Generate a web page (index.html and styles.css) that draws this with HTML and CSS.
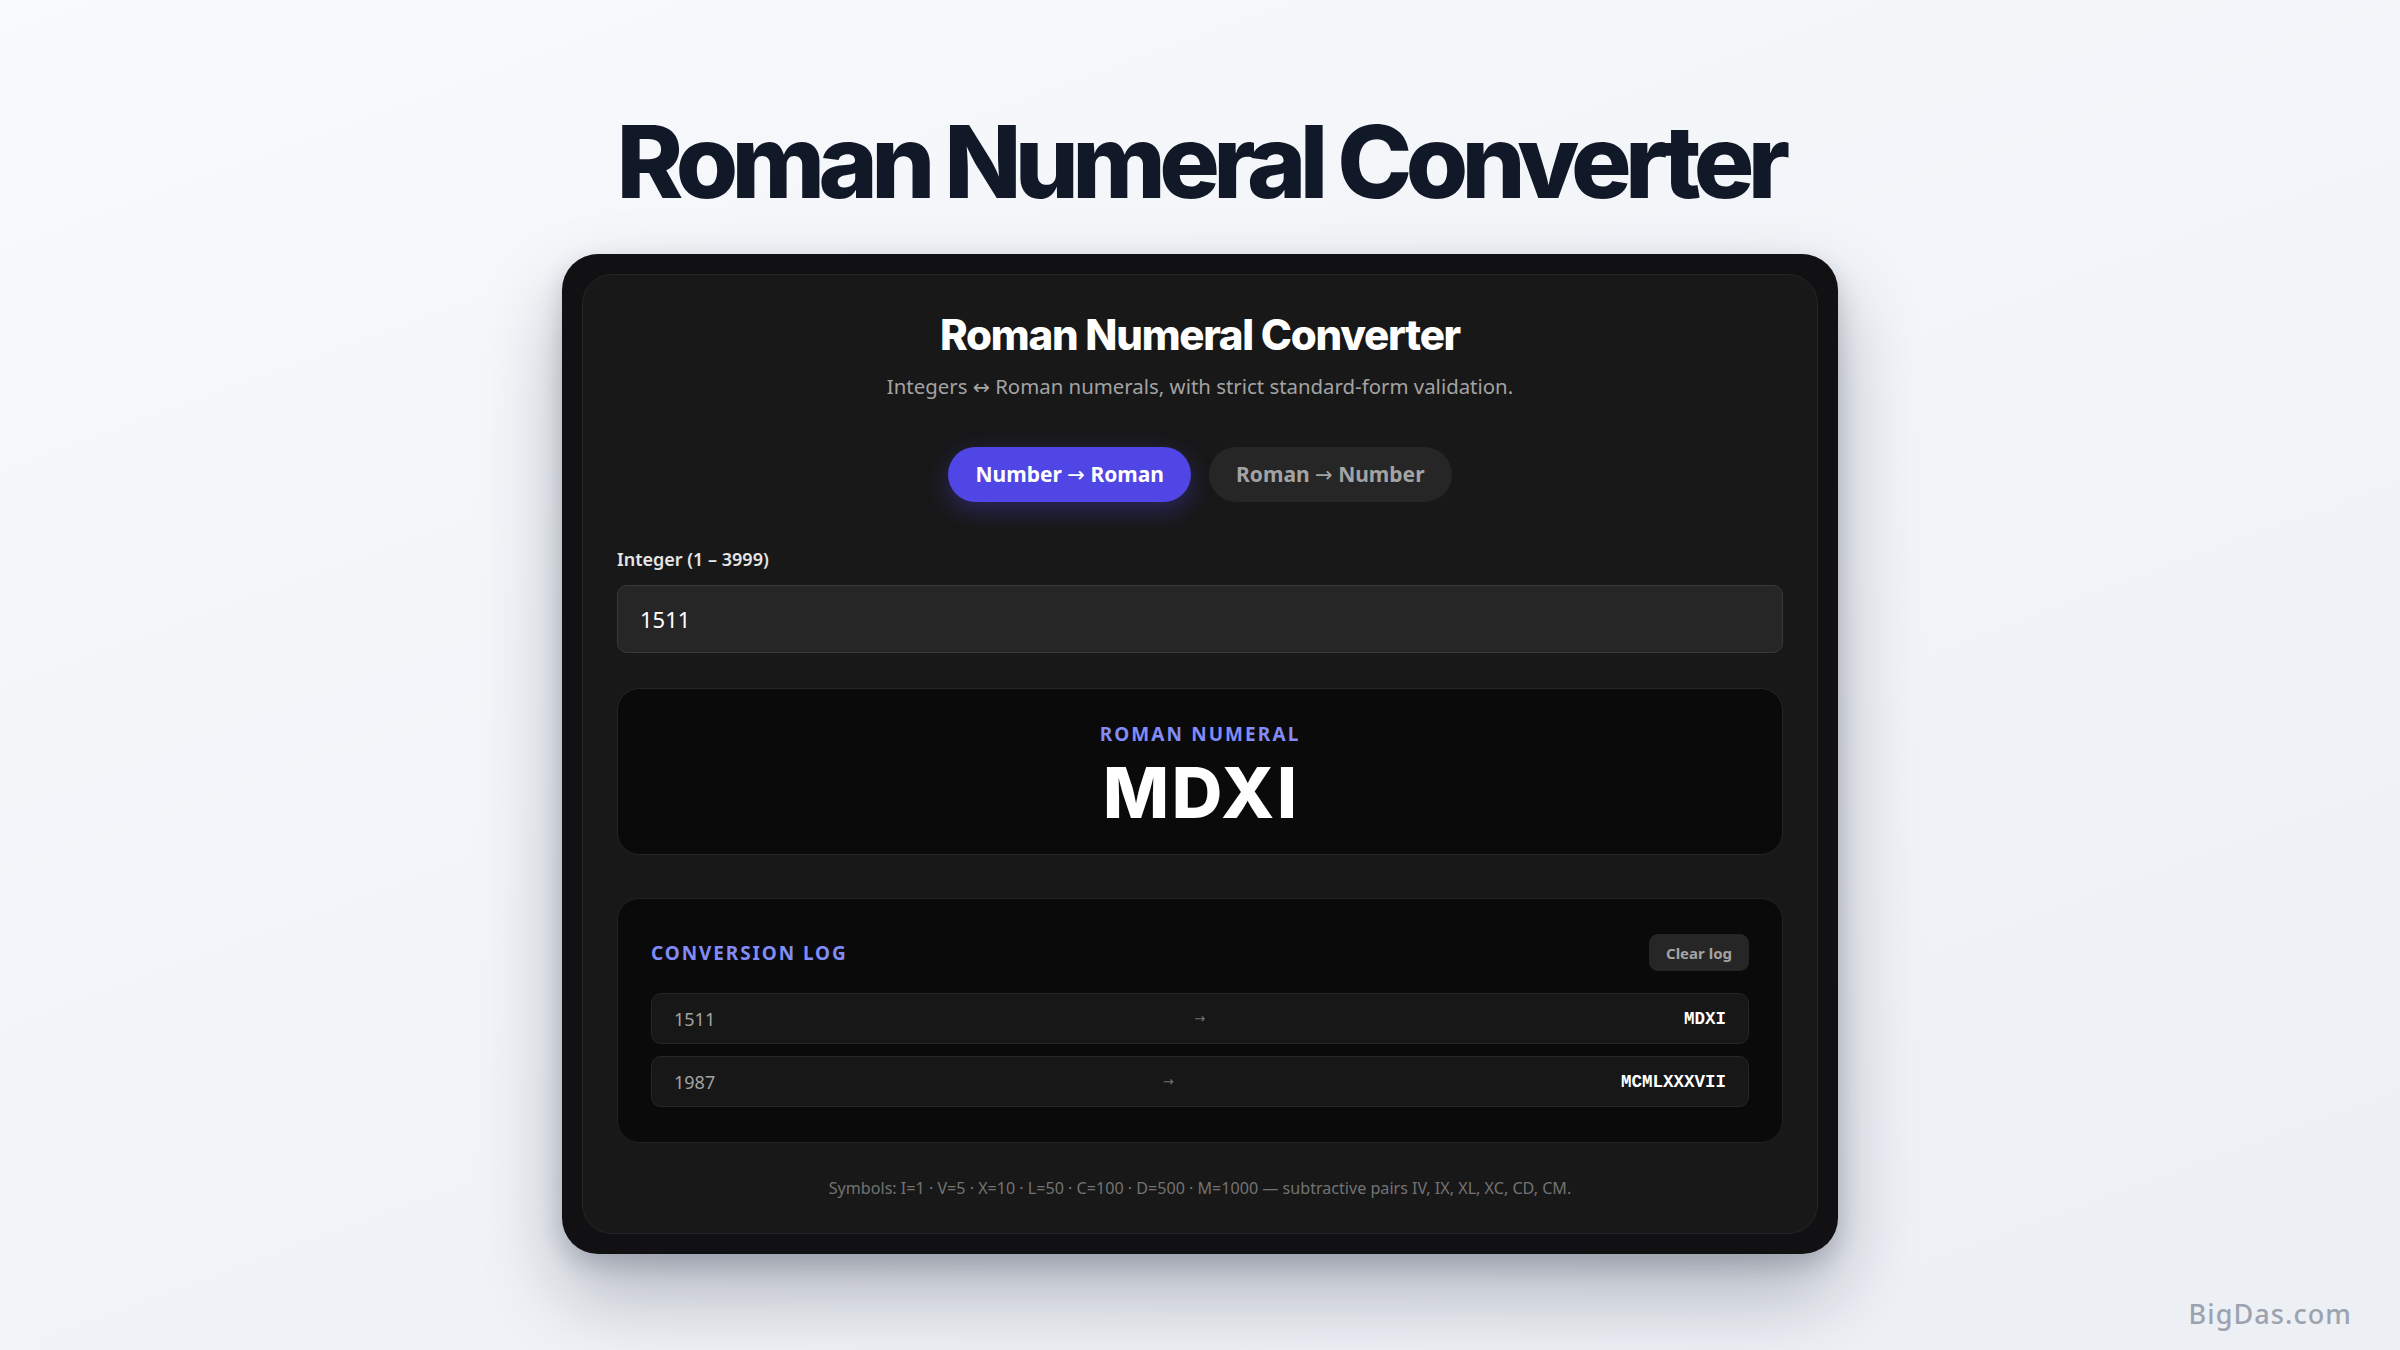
FILE: index.html
```html
<!DOCTYPE html>
<html lang="en">
<head>
<meta charset="utf-8">
<title>Roman Numeral Converter</title>
<link rel="stylesheet" href="styles.css">
</head>
<body>
<main class="page">
  <h1 class="page-title">Roman Numeral Converter</h1>
  <section class="frame">
    <div class="card">
      <h2 class="card-title">Roman Numeral Converter</h2>
      <p class="subtitle">Integers <span class="arr">↔</span> Roman numerals, with strict standard-form validation.</p>
      <div class="tabs">
        <button class="tab tab-active">Number <span class="arr">→</span> Roman</button>
        <button class="tab">Roman <span class="arr">→</span> Number</button>
      </div>
      <label class="field-label" for="num">Integer (1 – 3999)</label>
      <input class="field-input" id="num" type="text" value="1511">
      <div class="result">
        <div class="result-label">ROMAN NUMERAL</div>
        <div class="result-value">MDXI</div>
      </div>
      <div class="log">
        <div class="log-head">
          <span class="log-title">CONVERSION LOG</span>
          <button class="log-clear">Clear log</button>
        </div>
        <div class="log-rows">
          <div class="log-row"><span class="log-in">1511</span><span class="log-arrow">→</span><span class="log-out">MDXI</span></div>
          <div class="log-row"><span class="log-in">1987</span><span class="log-arrow">→</span><span class="log-out">MCMLXXXVII</span></div>
        </div>
      </div>
      <p class="footnote">Symbols: I=1 · V=5 · X=10 · L=50 · C=100 · D=500 · M=1000 — subtractive pairs IV, IX, XL, XC, CD, CM.</p>
    </div>
  </section>
</main>
<div class="watermark">BigDas.com</div>
</body>
</html>
```

FILE: styles.css
```css
* { box-sizing: border-box; }
html, body { margin: 0; padding: 0; }
body {
  min-height: 1350px;
  background: linear-gradient(160deg, #f8fafc 0%, #f1f4f8 50%, #eceff4 100%);
  font-family: "Noto Sans", "Open Sans", sans-serif;
  position: relative;
}
.page {
  display: flex;
  flex-direction: column;
  align-items: center;
  padding-top: 104px;
}
.page-title {
  margin: 0;
  font-family: Inter, sans-serif;
  font-weight: 800;
  font-size: 101px;
  line-height: 114px;
  letter-spacing: -0.066em;
  color: #111827;
}
.frame {
  margin-top: 36px;
  width: 1276px;
  padding: 20px;
  background: #111113;
  border-radius: 36px;
  box-shadow: 0 40px 80px rgba(15, 23, 42, 0.28), 0 10px 24px rgba(15, 23, 42, 0.18);
}
.card {
  background: #181818;
  border: 1px solid #262626;
  border-radius: 30px;
  padding: 34px 34px 33px;
  display: flex;
  flex-direction: column;
}
.arr {
  font-family: "DejaVu Sans", sans-serif;
  font-weight: 400;
  line-height: 1;
}
.card-title {
  margin: 0;
  text-align: center;
  color: #ffffff;
  font-family: Inter, sans-serif;
  font-weight: 800;
  font-size: 42px;
  line-height: 52px;
  letter-spacing: -0.03em;
}
.subtitle {
  margin: 10px 0 0;
  text-align: center;
  color: #a3a3a3;
  font-size: 20.4px;
  line-height: 30px;
}
.tabs {
  margin-top: 46px;
  display: flex;
  justify-content: center;
  gap: 18px;
}
.tab {
  height: 55px;
  padding: 0 27px;
  border: none;
  border-radius: 999px;
  background: #262626;
  color: #a3a3a3;
  font-family: "Noto Sans", sans-serif;
  font-weight: 700;
  font-size: 21px;
  line-height: 1;
}
.tab-active {
  background: #4f46e5;
  color: #ffffff;
  box-shadow: 0 8px 24px rgba(79, 70, 229, 0.35);
}
.field-label {
  margin-top: 44px;
  color: #e5e5e5;
  font-weight: 600;
  font-size: 18px;
  line-height: 26px;
}
.field-input {
  margin-top: 13px;
  height: 68px;
  width: 100%;
  background: #262626;
  border: 1.5px solid #3a3a3a;
  border-radius: 10px;
  padding: 0 22px;
  color: #ffffff;
  font-family: "Noto Sans", sans-serif;
  font-size: 22px;
  outline: none;
}
.result {
  margin-top: 35px;
  height: 167px;
  background: #0a0a0a;
  border: 1.5px solid #262626;
  border-radius: 22px;
  display: flex;
  flex-direction: column;
  align-items: center;
  padding-top: 33px;
}
.result-label {
  color: #818cf8;
  font-weight: 700;
  font-size: 19px;
  line-height: 24px;
  letter-spacing: 0.11em;
}
.result-value {
  margin-top: 15px;
  color: #ffffff;
  font-family: Inter, sans-serif;
  font-weight: 800;
  font-size: 70px;
  line-height: 64px;
  letter-spacing: 0.04em;
  padding-left: 0.04em;
}
.log {
  margin-top: 43px;
  background: #0a0a0a;
  border: 1.5px solid #222222;
  border-radius: 22px;
  padding: 35px 33px 35px;
}
.log-head {
  display: flex;
  justify-content: space-between;
  align-items: center;
}
.log-title {
  color: #818cf8;
  font-weight: 700;
  font-size: 19px;
  letter-spacing: 0.1em;
}
.log-clear {
  height: 37px;
  padding: 0 17px;
  border: none;
  border-radius: 9px;
  background: #262626;
  color: #a3a3a3;
  font-family: "Noto Sans", sans-serif;
  font-weight: 700;
  font-size: 15px;
}
.log-rows {
  margin-top: 22px;
  display: flex;
  flex-direction: column;
  gap: 12px;
}
.log-row {
  height: 51px;
  background: #171717;
  border: 1.5px solid #262626;
  border-radius: 10px;
  padding: 0 22px;
  display: flex;
  justify-content: space-between;
  align-items: center;
}
.log-in {
  color: #a3a3a3;
  font-size: 18px;
}
.log-arrow {
  color: #737373;
  font-family: "DejaVu Sans", sans-serif;
  font-size: 13px;
}
.log-out {
  color: #ffffff;
  font-family: "Liberation Mono", "DejaVu Sans Mono", monospace;
  font-weight: 700;
  font-size: 17.5px;
}
.footnote {
  margin: 33px 0 0;
  text-align: center;
  color: #737373;
  font-size: 16.1px;
  line-height: 24px;
}
.watermark {
  position: absolute;
  right: 48px;
  bottom: 18px;
  color: #9ca3af;
  font-family: "Noto Sans", sans-serif;
  font-weight: 500;
  font-size: 27px;
  letter-spacing: 0.04em;
}
```
